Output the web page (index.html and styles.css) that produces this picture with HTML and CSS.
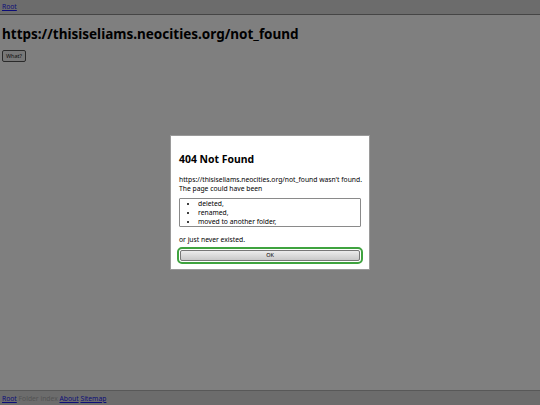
FILE: index.html
```html
<!DOCTYPE html>
<html lang="en">
<head>
<meta charset="utf-8">
<title>404 Not Found</title>
<link rel="stylesheet" href="styles.css">
</head>
<body>
<div class="page">
  <header class="topbar"><a href="#">Root</a></header>
  <main class="content">
    <h1 class="title">https://thisiseliams.neocities.org/not_found</h1>
    <button class="what">What?</button>
  </main>
  <footer class="bottombar">
    <a href="#">Root</a> <span class="disabled">Folder index</span> <a href="#">About</a> <a href="#">Sitemap</a>
  </footer>
</div>
<div class="overlay">
  <div class="dialog">
    <h2 class="dialog-title">404 Not Found</h2>
    <p class="dialog-text">https://thisiseliams.neocities.org/not_found wasn't found.<br>The page could have been</p>
    <div class="listbox">
      <ul>
        <li>deleted,</li>
        <li>renamed,</li>
        <li>moved to another folder,</li>
      </ul>
    </div>
    <p class="dialog-text end">or just never existed.</p>
    <div class="actions"><button class="ok">OK</button></div>
  </div>
</div>
</body>
</html>
```
FILE: styles.css
```css
html, body {
  margin: 0;
  padding: 0;
  height: 100%;
}
body {
  font-family: "Noto Sans", "Open Sans", sans-serif;
  background: #ffffff;
  color: #000;
}
a { color: #1a1aee; }
.page {
  display: flex;
  flex-direction: column;
  min-height: 100vh;
}
.topbar {
  background: #d8d8d8;
  height: 14px;
  border-bottom: 1px solid #8a8a8a;
  padding: 0 2px;
  font-size: 6.75px;
  line-height: 13px;
}
.content {
  flex: 1;
  padding: 0 2px;
}
.title {
  font-size: 13.5px;
  font-weight: bold;
  margin: 9px 0 6px;
  line-height: 20px;
}
.what {
  display: block;
  font-family: "Noto Sans", sans-serif;
  font-size: 5.5px;
  padding: 1.5px 3px;
  margin: 0;
  border: 1px solid #555;
  border-radius: 2px;
  background: #efefef;
  color: #222;
  line-height: 7px;
}
.bottombar {
  background: #d8d8d8;
  height: 15px;
  border-top: 1px solid #b0b0b0;
  padding: 0 2px;
  font-size: 6.75px;
  line-height: 15px;
  box-sizing: border-box;
}
.disabled { color: #a8a8a8; }
.overlay {
  position: fixed;
  inset: 0;
  background: rgba(0, 0, 0, 0.5);
  display: flex;
  align-items: center;
  justify-content: center;
}
.dialog {
  width: 200px;
  height: 135px;
  box-sizing: border-box;
  background: #fff;
  border: 1px solid #9a9a9a;
  padding: 16px 8px 6px;
  font-size: 6.75px;
  line-height: 9px;
}
.dialog-title {
  font-size: 10.4px;
  line-height: 15px;
  margin: 0 0 8px;
  font-weight: bold;
}
.dialog-text {
  margin: 0 0 5px;
  white-space: nowrap;
}
.dialog-text.end {
  margin: 8px 0 5px;
}
.listbox {
  height: 29px;
  box-sizing: border-box;
  border: 1px solid #8a8a8a;
  border-radius: 1px;
  overflow: hidden;
}
.listbox ul {
  margin: 0;
  padding: 0 0 0 18px;
}
.listbox li {
  line-height: 9px;
}
.actions {
  padding: 1px;
}
.ok {
  display: block;
  width: 100%;
  height: 11px;
  font-family: "Noto Sans", sans-serif;
  font-size: 5.5px;
  line-height: 9px;
  padding: 0;
  border: 1px solid #777;
  border-radius: 2px;
  background: linear-gradient(#ececec, #c9c9c9);
  outline: 2px solid #3fa33f;
  outline-offset: 1px;
}
```
